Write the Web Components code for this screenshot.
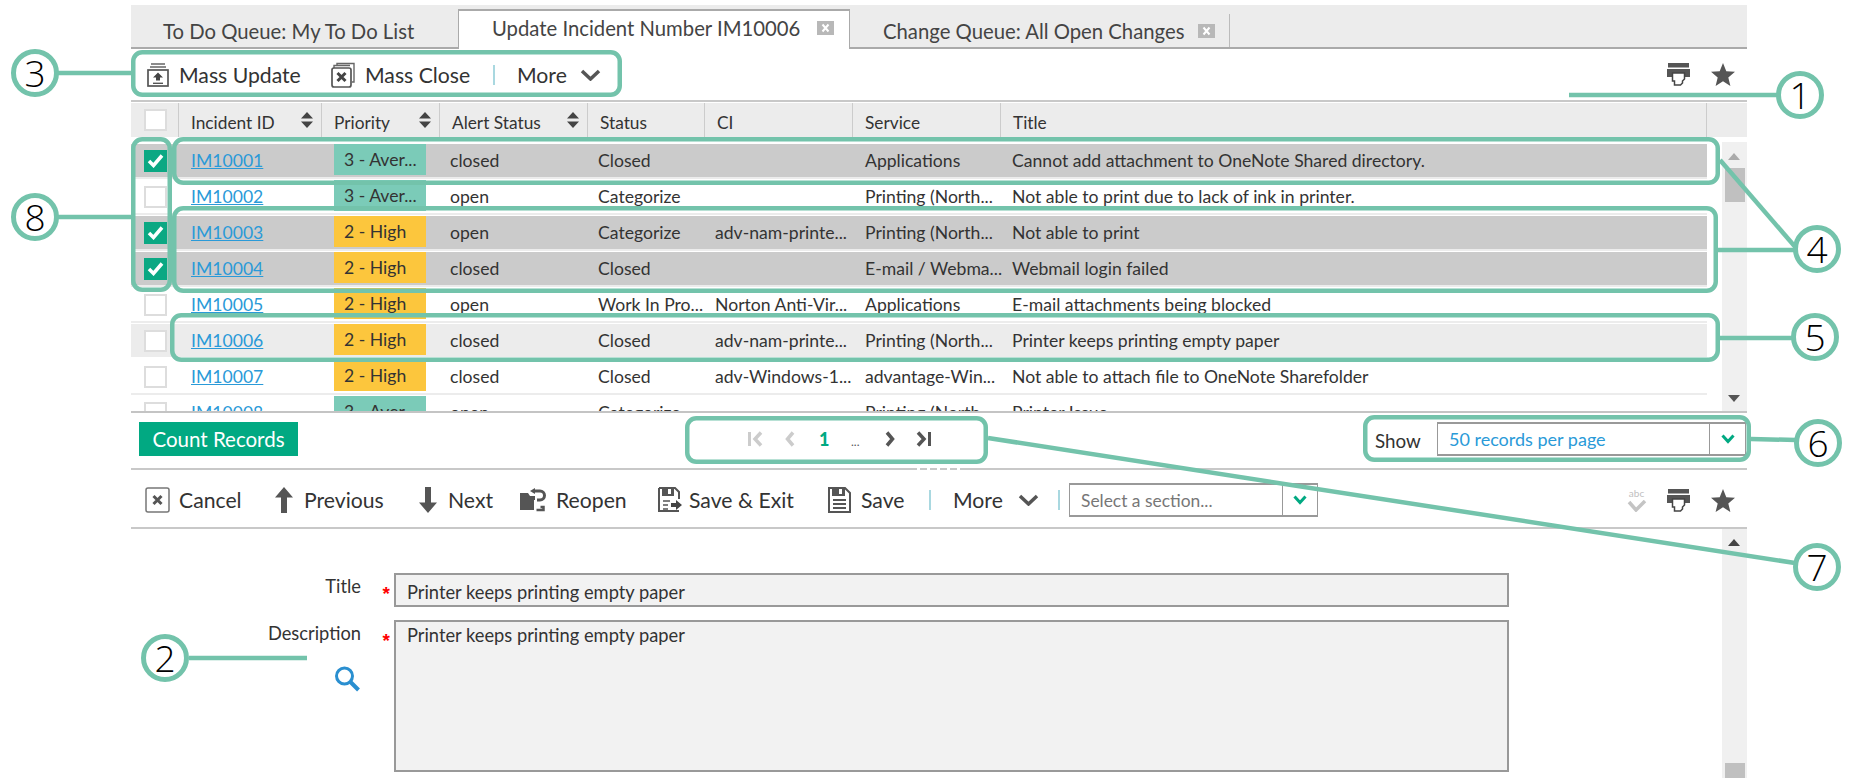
<!DOCTYPE html>
<html>
<head>
<meta charset="utf-8">
<title>Incident queue</title>
<style>
html, body { margin: 0; padding: 0; background: #fff; }
body { font-family: Lato, "Open Sans", sans-serif; color: #333; }
</style>
</head>
<body>
<incident-app>
    <queue-tabs></queue-tabs>
    <tool-bar>
        <tool-btn icon="massupdate" off="32" style="width:184px">Mass Update</tool-btn>
        <tool-btn icon="massclose" off="34" style="width:162px">Mass Close</tool-btn>
        <tool-sep style="margin-right:22px"></tool-sep>
        <tool-btn icon="chevron" after="13">More</tool-btn>
        <right-icons slot="right"></right-icons>
    </tool-bar>
    <incident-grid></incident-grid>
    <pager-bar></pager-bar>
    <tool-bar tall="1">
        <tool-btn icon="cancel" off="34" style="width:129px">Cancel</tool-btn>
        <tool-btn icon="arrowup" off="30" style="width:144px">Previous</tool-btn>
        <tool-btn icon="arrowdown" off="30" style="width:102px">Next</tool-btn>
        <tool-btn icon="reopen" off="36" style="width:138px">Reopen</tool-btn>
        <tool-btn icon="saveexit" off="31" style="width:170px">Save &amp; Exit</tool-btn>
        <tool-btn icon="save" off="33" style="width:101px">Save</tool-btn>
        <tool-sep style="margin-right:22px"></tool-sep>
        <tool-btn icon="chevron" after="15" style="width:105px">More</tool-btn>
        <tool-sep style="margin-right:9px"></tool-sep>
        <combo-box style="width:249px;height:34px" arrow="35" muted="1">Select a section...</combo-box>
        <right-icons slot="right" abc="1"></right-icons>
    </tool-bar>
    <incident-form></incident-form>
</incident-app>
<call-outs></call-outs>

<script>
const ICONS = {
    massupdate: [23, 24, `<path d="M4 1h14M3 4h16" stroke="#666" stroke-width="1.6" fill="none"/><rect x="1" y="7" width="20" height="16" fill="none" stroke="#555" stroke-width="1.7"/><path d="M11 9.5l5 5h-3v3H9v-3H6z" fill="#444"/><path d="M6 20.3h10" stroke="#555" stroke-width="1.4"/>`],
    massclose: [26, 26, `<path d="M6 4V1.5h17V20h-2M9 1.500V.8M3 6V3.500h16" fill="none" stroke="#666" stroke-width="1.4"/><rect x="1" y="6" width="19" height="19" rx="2" fill="#fff" stroke="#555" stroke-width="1.7"/><path d="M6.500 11l8 8M14.500 11l-8 8" stroke="#444" stroke-width="3"/>`],
    cancel: [25, 26, `<rect x="1" y="1" width="23" height="24" rx="2" fill="none" stroke="#777" stroke-width="1.5"/><path d="M8.500 9l8 8M16.500 9l-8 8" stroke="#555" stroke-width="3"/>`],
    arrowup: [20, 26, `<path d="M10 0l9 10.500h-6V26H7V10.500H1z" fill="#555"/>`],
    arrowdown: [20, 26, `<path d="M10 26L1 15.500h6V0h6v15.500h6z" fill="#555"/>`],
    reopen: [27, 24, `<path d="M0 5h8l2 3h5v4h-1v10H0z" fill="#555"/><path d="M14 3h6a4.500 4.500 0 0 1 0 9h-3" fill="none" stroke="#555" stroke-width="3"/><path d="M15 0v6l-5-3z" fill="#555"/><path d="M16.500 22h7v-3h-3" fill="none" stroke="#555" stroke-width="2.500"/>`],
    saveexit: [25, 26, `<path d="M1 1h16l4 4v7M21 24H1V1" fill="none" stroke="#555" stroke-width="2"/><path d="M4 0h12v9H4z" fill="#555"/><path d="M10 2h3v5h-3z" fill="#fff"/><path d="M5 14h7M5 18h5M5 22h5" stroke="#555" stroke-width="1.500"/><path d="M13 16h5v-3l6 5-6 5v-3h-5z" fill="#444"/>`],
    save: [23, 26, `<path d="M1 1h16l5 5v19H1z" fill="none" stroke="#555" stroke-width="2"/><path d="M4 0h13v9H4z" fill="#555"/><path d="M11 2h3v5h-3z" fill="#fff"/><path d="M5 13h13M5 17h13M5 21h13" stroke="#555" stroke-width="1.800"/>`],
    printer: [23, 23, `<path d="M1 0h21v4.500H1zM0 6h23v8H0z" fill="#555"/><path d="M5.500 10h12v6l-2 2v2l-2 2h-6v-4h-2z" fill="#fff" stroke="#444" stroke-width="1.500"/>`],
    star: [24, 23, `<path d="M12 0l3.300 8.200 8.700.6-6.700 5.600L19.400 23 12 18.300 4.600 23l2.100-8.600L0 8.800l8.700-.6z" fill="#555"/>`],
    search: [27, 26, `<circle cx="10.500" cy="10" r="8" fill="none" stroke="#2a8fd0" stroke-width="3"/><path d="M16.500 16l8 8" stroke="#2a8fd0" stroke-width="4"/>`],
    chevron: [21, 12, `<path d="M2 2l8.500 8L19 2" fill="none" stroke="#555" stroke-width="3.500"/>`],
    green: [14, 10, `<path d="M1.500 1.500l5.500 6 5.500-6" fill="none" stroke="#01a982" stroke-width="3"/>`],
    first: [15, 16, `<path d="M1.500 1v14" stroke="#ccc" stroke-width="3"/><path d="M13 1.500L7 8l6 6.500" fill="none" stroke="#ccc" stroke-width="3.500"/>`],
    prev: [10, 16, `<path d="M8 1.500L2.500 8 8 14.500" fill="none" stroke="#ccc" stroke-width="3.500"/>`],
    next: [10, 16, `<path d="M2 1.500L7.500 8 2 14.500" fill="none" stroke="#555" stroke-width="3.500"/>`],
    last: [15, 16, `<path d="M2 1.500L8 8l-6 6.500" fill="none" stroke="#555" stroke-width="3.500"/><path d="M13.500 1v14" stroke="#555" stroke-width="3"/>`],
    sort: [14, 16, `<path d="M7 0l6 6.500H1zM7 16L1 9.500h12z" fill="#444"/>`],
    tick: [17, 15, `<path d="M2 8l4.500 4.500L15 2.500" fill="none" stroke="#fff" stroke-width="3.500"/>`],
    abccheck: [20, 12, `<path d="M2 2l7 8L18 1" fill="none" stroke="#c4c4c4" stroke-width="3.500"/>`],
    tabx: [17, 14, `<rect width="17" height="14" fill="#b8b8b8"/><path d="M5.500 3.500l6 7M11.500 3.500l-6 7" stroke="#fff" stroke-width="2"/>`]
};

function svgIcon(name)
{
    let ic = ICONS[name];
    return `<svg width="${ic[0]}" height="${ic[1]}" viewBox="0 0 ${ic[0]} ${ic[1]}" style="display:block;flex:none">${ic[2]}</svg>`;
}

// small base class, every element just hands back its css + markup
class ShadowElement extends HTMLElement
{
    connectedCallback()
    {
        if(this.shadowRoot)
            return;
        this.attachShadow({ mode: 'open' });
        let template = document.createElement('template');
        template.innerHTML = "<style>" + this.css() + "</style>" + this.template();
        this.shadowRoot.appendChild(document.importNode(template.content, true));
    }
    css() { return ""; }
    template() { return "<slot></slot>"; }
}

class IncidentApp extends ShadowElement
{
    css()
    {
        return `:host { display:flex; flex-direction:column; width:1616px; height:778px; margin-left:131px;
                        padding-top:5px; box-sizing:border-box; overflow:hidden; }`;
    }
}

class QueueTabs extends ShadowElement
{
    css()
    {
        return `
        :host { display:flex; height:44px; box-sizing:border-box; background:#ececec; border-bottom:2px solid #aaa;
                padding-left:0; align-items:flex-end; font-size:20.300px; color:#444; flex:none; }
        .tab { display:flex; align-items:center; box-sizing:border-box; height:33px; white-space:nowrap; }
        .first { width:327px; padding-left:32px; }
        .active { position:relative; width:392px; height:40px; margin-bottom:-2px; background:#fff; border:1px solid #aaa;
                  border-bottom:none; border-top-width:2px; padding-left:33px; padding-bottom:5px; }
        .third { width:380px; padding-left:33px; border-right:1px solid #bbb; }
        .tab svg { margin-left:17px; }
        .third svg { margin-left:14px; }
        `;
    }
    template()
    {
        return `
        <div class="tab first">To Do Queue: My To Do List</div>
        <div class="tab active">Update Incident Number IM10006${svgIcon("tabx")}</div>
        <div class="tab third">Change Queue: All Open Changes${svgIcon("tabx")}</div>`;
    }
}

class ToolBar extends ShadowElement
{
    css()
    {
        let tall = this.hasAttribute("tall");
        return `:host { display:flex; align-items:center; height:${tall ? 59 : 53}px; box-sizing:border-box; flex:none;
                        border-bottom:2px solid #c8c8c8; padding-left:${tall ? 14 : 16}px; padding-top:${tall ? 3 : 0}px;
                        font-size:21.200px; color:#333; white-space:nowrap; }
                .r { margin-left:auto; }`;
    }
    template()
    {
        return `<slot></slot><div class="r"><slot name="right"></slot></div>`;
    }
}

class ToolBtn extends ShadowElement
{
    css()
    {
        return `:host { display:block; flex:none; }
                .b { display:flex; align-items:center; }
                .i { flex:none; }`;
    }
    template()
    {
        let name = this.getAttribute("icon");
        if(this.hasAttribute("after"))
            return `<div class="b"><slot></slot><span class="i" style="margin-left:${this.getAttribute("after")}px">${svgIcon(name)}</span></div>`;
        let off = parseInt(this.getAttribute("off")) || 30;
        return `<div class="b"><span class="i" style="width:${off}px">${svgIcon(name)}</span><slot></slot></div>`;
    }
}

class ToolSep extends ShadowElement
{
    css() { return `:host { display:block; width:2px; height:20px; background:#a9d8e0; flex:none; }`; }
    template() { return ""; }
}

class RightIcons extends ShadowElement
{
    css()
    {
        return `:host { display:flex; align-items:center; gap:21px; padding-right:12px; }
                .abc { position:relative; width:23px; height:24px; margin-right:-2px; font:10px/10px Lato,sans-serif; color:#c0c0c0; text-align:center; }
                .abc svg { position:absolute; left:2px; bottom:0; }`;
    }
    template()
    {
        let abc = this.hasAttribute("abc") ? `<div class="abc">abc${svgIcon("abccheck")}</div>` : "";
        return abc + svgIcon("printer") + svgIcon("star");
    }
}

class ComboBox extends ShadowElement
{
    css()
    {
        let muted = this.hasAttribute("muted");
        let arrow = parseInt(this.getAttribute("arrow")) || 35;
        return `:host { display:grid; grid-template-columns:1fr ${arrow}px; box-sizing:border-box; flex:none;
                        border:1px solid #999; border-bottom-width:2px; border-top-width:2px; background:#fff;
                        font-size:${muted ? 17.4 : 18}px; color:${muted ? "#777" : "#2a9ad8"}; }
                .t { padding-left:11px; align-self:center; white-space:nowrap; }
                .a { border-left:1px solid #999; display:flex; align-items:center; justify-content:center; }`;
    }
    template()
    {
        return `<div class="t"><slot></slot></div><div class="a">${svgIcon("green")}</div>`;
    }
}

const ROWS = [
    ["IM10001", 3, "closed", "Closed", "", "Applications", "Cannot add attachment to OneNote Shared directory.", "sel"],
    ["IM10002", 3, "open", "Categorize", "", "Printing (North...", "Not able to print due to lack of ink in printer.", ""],
    ["IM10003", 2, "open", "Categorize", "adv-nam-printe...", "Printing (North...", "Not able to print", "sel"],
    ["IM10004", 2, "closed", "Closed", "", "E-mail / Webma...", "Webmail login failed", "sel"],
    ["IM10005", 2, "open", "Work In Pro...", "Norton Anti-Vir...", "Applications", "E-mail attachments being blocked", ""],
    ["IM10006", 2, "closed", "Closed", "adv-nam-printe...", "Printing (North...", "Printer keeps printing empty paper", "cur"],
    ["IM10007", 2, "closed", "Closed", "adv-Windows-1...", "advantage-Win...", "Not able to attach file to OneNote Sharefolder", ""],
    ["IM10008", 3, "open", "Categorize", "", "Printing (North...", "Printer Issue", ""]
];

class IncidentGrid extends ShadowElement
{
    css()
    {
        return `
        :host { display:block; flex:none; margin-top:1px; position:relative; font-size:17.600px; color:#333; }
        .head { display:grid; grid-template-columns:48px 143px 118px 148px 117px 148px 148px 706px 40px; height:34px; background:#ececec; align-items:stretch; font-size:17.300px; }
        .head > div { display:flex; align-items:center; border-right:1px solid #ccc; padding:5px 7px 0 12px; box-sizing:border-box; justify-content:space-between; }
        .head > div:last-child { border-right:none; }
        .head svg { margin-top:-5px; }
        .body { display:flex; height:276px; box-sizing:border-box; border-bottom:2px solid #c4c4c4; overflow:hidden; }
        .rows { width:1576px; flex:none; padding-top:7px; }
        .gutter { width:15px; flex:none; }
        .sb { width:25px; flex:none; position:relative; background:#f0f0f0; margin-top:5px; }
        .up { position:absolute; left:6px; top:11px; width:0; height:0; border:6px solid transparent; border-top:none; border-bottom:7px solid #aaa; }
        .dn { position:absolute; left:6px; bottom:9px; width:0; height:0; border:6px solid transparent; border-bottom:none; border-top:7px solid #555; }
        .th { position:absolute; left:3px; top:26px; width:20px; height:34px; background:#c0c0c0; }
        .row { display:grid; grid-template-columns:48px 143px 118px 148px 117px 148px 148px 706px; height:36px; }
        .row > div { height:33px; display:flex; align-items:center; padding-left:11px; box-sizing:border-box; white-space:nowrap; }
        .row { background:linear-gradient(#fff 33px,#ececec 33px,#ececec 35px,#fff 35px); }
        .sel { background:linear-gradient(#cbcbcb 33px,#ececec 33px,#ececec 35px,#fff 35px); }
        .cur { background:linear-gradient(#ececec 33px,#fff 33px); }
        .row > .pri { padding:0; }
        .chip { width:92px; height:31px; margin:0 0 2px 12px; padding-left:10px; box-sizing:border-box; line-height:31px; color:#333; flex:none; overflow:hidden; }
        .p3 { background:#7bcbb8; }
        .p2 { background:#fcc63d; }
        a { color:#2a9ad8; text-decoration:underline; }
        .cb { width:23px; height:22px; box-sizing:border-box; border:2px solid #ddd; background:#fff; margin-left:13px; flex:none; display:flex; align-items:center; justify-content:center; }
        .row .cbc, .head .cbc { padding:0; }
        .on { background:#0ba883; border:none; }
        `;
    }
    template()
    {
        let heads = [["Incident ID",1],["Priority",1],["Alert Status",1],["Status",0],["CI",0],["Service",0],["Title",0]];
        let head = `<div class="cbc"><span class="cb"></span></div>`;
        for(let ndx in heads)
            head += `<div><span>${heads[ndx][0]}</span>${heads[ndx][1] ? svgIcon("sort") : ""}</div>`;
        head += `<div></div>`;

        let rows = "";
        for(let ndx in ROWS)
        {
            let r = ROWS[ndx];
            let on = r[7] == "sel";
            let label = r[1] == 3 ? "3 - Aver..." : "2 - High";
            rows += `<div class="row ${r[7]}">
                <div class="cbc"><span class="cb ${on ? "on" : ""}">${on ? svgIcon("tick") : ""}</span></div>
                <div style="padding-left:12px"><a>${r[0]}</a></div>
                <div class="pri"><span class="chip p${r[1]}">${label}</span></div>
                <div style="padding-left:10px">${r[2]}</div>
                <div style="padding-left:10px">${r[3]}</div>
                <div style="padding-left:10px">${r[4]}</div>
                <div style="padding-left:12px">${r[5]}</div>
                <div style="padding-left:11px">${r[6]}</div>
            </div>`;
        }
        return `<div class="head">${head}</div>
        <div class="body">
            <div class="rows">${rows}</div>
            <div class="gutter"></div>
            <div class="sb"><i class="up"></i><i class="th"></i><i class="dn"></i></div>
        </div>`;
    }
}

class PagerBar extends ShadowElement
{
    css()
    {
        return `
        :host { display:flex; align-items:center; position:relative; height:57px; box-sizing:border-box; flex:none;
                border-bottom:2px solid #c8c8c8; padding-bottom:3px; font-size:18px; }
        .count { margin-left:8px; width:159px; height:34px; box-sizing:border-box; background:#01a982; color:#fff; font-size:20.500px;
                 display:flex; align-items:center; justify-content:center; flex:none; white-space:nowrap; }
        .pages { display:flex; align-items:center; margin-left:450px; flex:none; }
        .one { color:#01a982; font-weight:900; font-size:18px; width:32px; margin-left:24px; }
        .dots { width:34px; color:#555; font-size:12px; padding-top:4px; box-sizing:border-box; }
        .show { margin-left:auto; display:flex; align-items:center; padding-right:1px; font-size:18.800px; }
        .show span { width:62px; padding-top:3px; }
        .grip { position:absolute; left:786px; bottom:-2px; width:48px; height:2px;
                background:repeating-linear-gradient(90deg,#fff 0 3px,#c8c8c8 3px 10px); }
        `;
    }
    template()
    {
        return `
        <div class="count">Count Records</div>
        <div class="pages">${svgIcon("first")}<span style="width:22px"></span>${svgIcon("prev")}
            <span class="one">1</span><span class="dots">...</span>
            ${svgIcon("next")}<span style="width:21px"></span>${svgIcon("last")}</div>
        <div class="show"><span>Show</span><combo-box style="width:309px;height:34px" arrow="36">50 records per page</combo-box></div>
        <i class="grip"></i>`;
    }
}

class IncidentForm extends ShadowElement
{
    css()
    {
        return `
        :host { display:flex; flex:1; min-height:0; font-size:18.300px; color:#333; }
        .main { width:1591px; flex:none; display:grid; grid-template-columns:230px 33px 1115px; grid-auto-rows:min-content; row-gap:13px; padding-top:44px; box-sizing:border-box; }
        .lab { text-align:right; padding-top:2px; line-height:22px; }
        .star { color:#f00; text-align:right; padding:11px 4px 0 0; font:bold 19px/20px "Liberation Sans",sans-serif; box-sizing:border-box; }
        .f { box-sizing:border-box; background:#f2f2f2; border:2px solid #999; padding-left:11px; }
        .t { height:34px; line-height:34px; }
        .d { height:152px; line-height:22px; padding-top:2px; }
        .lens { display:flex; justify-content:flex-end; margin-top:22px; }
        .sb { width:25px; flex:none; position:relative; background:#f0f0f0; }
        .up { position:absolute; left:6px; top:10px; width:0; height:0; border:6px solid transparent; border-top:none; border-bottom:7px solid #444; }
        .th { position:absolute; left:3px; bottom:0; width:20px; height:15px; background:#c0c0c0; }
        `;
    }
    template()
    {
        return `
        <div class="main">
            <div class="lab">Title</div><div class="star">*</div><div class="f t">Printer keeps printing empty paper</div>
            <div class="lab">Description<div class="lens">${svgIcon("search")}</div></div><div class="star">*</div><div class="f d">Printer keeps printing empty paper</div>
        </div>
        <div class="sb"><i class="up"></i><i class="th"></i></div>`;
    }
}

// the numbered green annotations lying over the screenshot
const CALL_RECTS = [
    [131,50,622,97],[131,137,172,292],[172,137,1720,185],[172,206,1718,293],
    [170,313,1720,362],[1363,415,1751,462],[685,416,988,464]
];
const CALL_LINES = [
    [56,73,133,73],[56,217,133,217],[189,658,307,658],[1569,95,1778,95],
    [1720,160,1797,249],[1718,250,1795,250],[1720,338,1793,338],[1751,439,1796,440],[988,438,1795,563]
];
const CALL_DOTS = [[1,1800,95],[2,165,658],[3,35,73],[4,1817,249],[5,1815,337],[6,1818,443],[7,1817,567],[8,35,217]];

class CallOuts extends ShadowElement
{
    css()
    {
        return `
        :host { position:absolute; left:0; top:0; width:1853px; height:778px; pointer-events:none; }
        svg { position:absolute; left:0; top:0; }
        .dot { position:absolute; width:48px; height:48px; margin:-24px 0 0 -24px; box-sizing:border-box; border:5px solid #73c3ab; border-radius:50%;
               background:#fff; color:#000; font:300 37px/38px "Open Sans",sans-serif; text-align:center; }
        `;
    }
    template()
    {
        let shapes = "";
        for(let r of CALL_RECTS)
            shapes += `<rect x="${r[0]+2.25}" y="${r[1]+2.25}" width="${r[2]-r[0]-4.5}" height="${r[3]-r[1]-4.5}" rx="9"/>`;
        for(let l of CALL_LINES)
            shapes += `<line x1="${l[0]}" y1="${l[1]}" x2="${l[2]}" y2="${l[3]}"/>`;
        let dots = "";
        for(let d of CALL_DOTS)
            dots += `<div class="dot" style="left:${d[1]}px;top:${d[2]}px">${d[0]}</div>`;
        return `<svg width="1853" height="778" fill="none" stroke="#73c3ab" stroke-width="4.500">${shapes}</svg>${dots}`;
    }
}

customElements.define("incident-app", IncidentApp);
customElements.define("queue-tabs", QueueTabs);
customElements.define("tool-bar", ToolBar);
customElements.define("tool-btn", ToolBtn);
customElements.define("tool-sep", ToolSep);
customElements.define("right-icons", RightIcons);
customElements.define("combo-box", ComboBox);
customElements.define("incident-grid", IncidentGrid);
customElements.define("pager-bar", PagerBar);
customElements.define("incident-form", IncidentForm);
customElements.define("call-outs", CallOuts);
</script>
</body>
</html>
